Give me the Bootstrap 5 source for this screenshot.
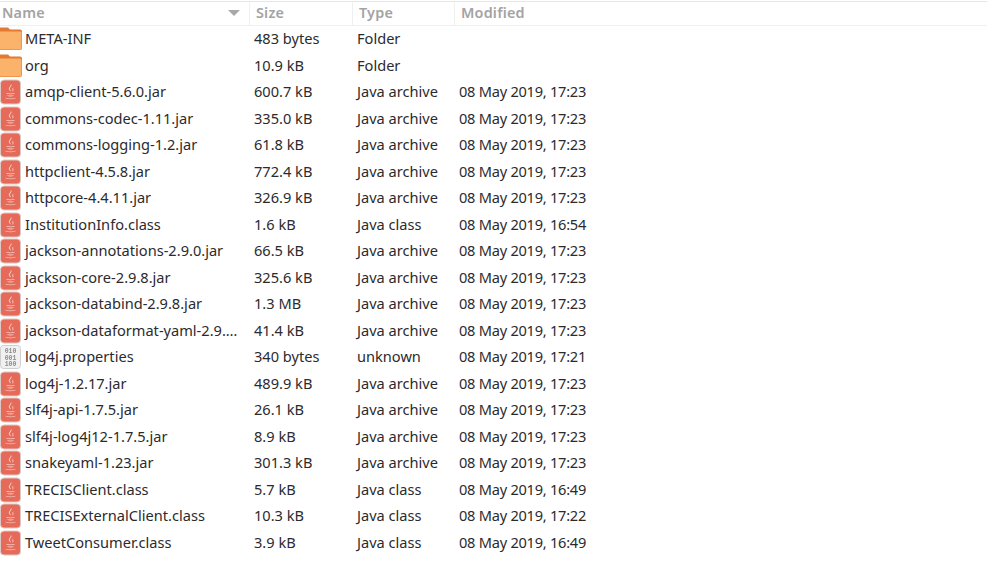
<!DOCTYPE html>
<html lang="en">
<head>
<meta charset="utf-8">
<title>Files</title>
<link href="https://cdn.jsdelivr.net/npm/bootstrap@5.3.0/dist/css/bootstrap.min.css" rel="stylesheet">
<style>
html,body{height:100%;overflow:hidden;background:#fff}
body{font-family:"Noto Sans","Open Sans","Liberation Sans",sans-serif;font-size:14.6px;color:#2b2b2e;padding-top:1px}
.fm-head{height:24.9px;border-top:1px solid #e6e6e6;border-bottom:1px solid #f0f0ee;color:#a3a3a3;font-weight:600;font-size:14.4px;letter-spacing:.2px}
.fm-head>div{border-right:1px solid #f0f0ee;height:100%;display:flex;align-items:center;padding-left:6px;padding-bottom:2px}
.fm-head>div:first-child{padding-left:2px;justify-content:space-between;padding-right:9px}
.fm-head>div:last-child{border-right:0}
.fm-tri{width:0;height:0;border:6px solid transparent;border-top:6px solid #a8a8a8;border-bottom:0;margin-top:2px}
.fm-row{height:26.53px;align-items:center}
.c1{width:250px;flex:none}
.c2{width:103px;flex:none}
.c3{width:102px;flex:none}
.c4{flex:1 1 auto;letter-spacing:-.25px}
.fm-head .c4{letter-spacing:.2px}
.fm-row .c1{display:flex;align-items:center;gap:3px;overflow:hidden;white-space:nowrap}
.fm-row .c2{padding-left:4px}
.fm-row .c3{padding-left:4px}
.fm-row .c4{padding-left:4px}
.fm-ico{width:22px;height:26px;flex:none;display:block;filter:blur(.35px)}
</style>
</head>
<body>
<svg width="0" height="0" class="d-block position-absolute">
<defs>
<symbol id="i-folder" viewBox="0 0 22 26">
<path d="M0 1.500h8l2 2h10a2 2 0 0 1 2 2v16.500a2 2 0 0 1-2 2H0z" fill="#e27a33"/>
<path d="M0 5.500h20a1.500 1.500 0 0 1 1.500 1.500V22a1.500 1.500 0 0 1-1.500 1.500H0z" fill="#fbb36c"/>
</symbol>
<symbol id="i-java" viewBox="0 0 22 26">
<rect x=".5" y="1" width="20" height="24" rx="3.500" fill="#e56a5a" stroke="#dcc9c5"/>
<g fill="#f9cfc6">
<path d="M11 5c2 2-2 3.500-1 5.500.4.800 1 1.200 1 2-1-.6-2.400-1.700-2.200-3C9 8 11 7 11 5zM13.500 8.500c-1 .7-1.500 1.300-1 2.500.3.700.2 1.200-.2 1.700.9-.4 1.500-1.200 1-2.300-.3-.7-.2-1.200.2-1.900z"/>
<path d="M6.500 14c2 .5 6 .5 8 0v.8c-2 .5-6 .5-8 0zM7.500 16.300c1.500.4 4.500.4 6 0v.8c-1.500.4-4.500.4-6 0zM5 18.800c3 1 8 1 11 0-.5 1.800-10.500 1.800-11 0z"/>
</g>
</symbol>
<symbol id="i-bin" viewBox="0 0 22 26">
<rect x=".5" y="1.500" width="20" height="23" rx="3" fill="#f1f1f1" stroke="#cfcfcf"/>
<text x="10.500" y="9" font-size="6.500" font-family="Liberation Mono,monospace" font-weight="700" fill="#8c8c8c" text-anchor="middle">010</text>
<text x="10.500" y="15.500" font-size="6.500" font-family="Liberation Mono,monospace" font-weight="700" fill="#8c8c8c" text-anchor="middle">001</text>
<text x="10.500" y="22" font-size="6.500" font-family="Liberation Mono,monospace" font-weight="700" fill="#8c8c8c" text-anchor="middle">100</text>
</symbol>
</defs>
</svg>
<div class="fm-head d-flex">
<div class="c1"><span>Name</span><span class="fm-tri"></span></div>
<div class="c2">Size</div>
<div class="c3">Type</div>
<div class="c4">Modified</div>
</div>
<div class="fm-rows">
<div class="fm-row d-flex"><div class="c1"><svg class="fm-ico"><use href="#i-folder"/></svg>META-INF</div><div class="c2">483 bytes</div><div class="c3">Folder</div><div class="c4"></div></div>
<div class="fm-row d-flex"><div class="c1"><svg class="fm-ico"><use href="#i-folder"/></svg>org</div><div class="c2">10.9 kB</div><div class="c3">Folder</div><div class="c4"></div></div>
<div class="fm-row d-flex"><div class="c1"><svg class="fm-ico"><use href="#i-java"/></svg>amqp-client-5.6.0.jar</div><div class="c2">600.7 kB</div><div class="c3">Java archive</div><div class="c4">08 May 2019, 17:23</div></div>
<div class="fm-row d-flex"><div class="c1"><svg class="fm-ico"><use href="#i-java"/></svg>commons-codec-1.11.jar</div><div class="c2">335.0 kB</div><div class="c3">Java archive</div><div class="c4">08 May 2019, 17:23</div></div>
<div class="fm-row d-flex"><div class="c1"><svg class="fm-ico"><use href="#i-java"/></svg>commons-logging-1.2.jar</div><div class="c2">61.8 kB</div><div class="c3">Java archive</div><div class="c4">08 May 2019, 17:23</div></div>
<div class="fm-row d-flex"><div class="c1"><svg class="fm-ico"><use href="#i-java"/></svg>httpclient-4.5.8.jar</div><div class="c2">772.4 kB</div><div class="c3">Java archive</div><div class="c4">08 May 2019, 17:23</div></div>
<div class="fm-row d-flex"><div class="c1"><svg class="fm-ico"><use href="#i-java"/></svg>httpcore-4.4.11.jar</div><div class="c2">326.9 kB</div><div class="c3">Java archive</div><div class="c4">08 May 2019, 17:23</div></div>
<div class="fm-row d-flex"><div class="c1"><svg class="fm-ico"><use href="#i-java"/></svg>InstitutionInfo.class</div><div class="c2">1.6 kB</div><div class="c3">Java class</div><div class="c4">08 May 2019, 16:54</div></div>
<div class="fm-row d-flex"><div class="c1"><svg class="fm-ico"><use href="#i-java"/></svg>jackson-annotations-2.9.0.jar</div><div class="c2">66.5 kB</div><div class="c3">Java archive</div><div class="c4">08 May 2019, 17:23</div></div>
<div class="fm-row d-flex"><div class="c1"><svg class="fm-ico"><use href="#i-java"/></svg>jackson-core-2.9.8.jar</div><div class="c2">325.6 kB</div><div class="c3">Java archive</div><div class="c4">08 May 2019, 17:23</div></div>
<div class="fm-row d-flex"><div class="c1"><svg class="fm-ico"><use href="#i-java"/></svg>jackson-databind-2.9.8.jar</div><div class="c2">1.3 MB</div><div class="c3">Java archive</div><div class="c4">08 May 2019, 17:23</div></div>
<div class="fm-row d-flex"><div class="c1"><svg class="fm-ico"><use href="#i-java"/></svg>jackson-dataformat-yaml-2.9.…</div><div class="c2">41.4 kB</div><div class="c3">Java archive</div><div class="c4">08 May 2019, 17:23</div></div>
<div class="fm-row d-flex"><div class="c1"><svg class="fm-ico"><use href="#i-bin"/></svg>log4j.properties</div><div class="c2">340 bytes</div><div class="c3">unknown</div><div class="c4">08 May 2019, 17:21</div></div>
<div class="fm-row d-flex"><div class="c1"><svg class="fm-ico"><use href="#i-java"/></svg>log4j-1.2.17.jar</div><div class="c2">489.9 kB</div><div class="c3">Java archive</div><div class="c4">08 May 2019, 17:23</div></div>
<div class="fm-row d-flex"><div class="c1"><svg class="fm-ico"><use href="#i-java"/></svg>slf4j-api-1.7.5.jar</div><div class="c2">26.1 kB</div><div class="c3">Java archive</div><div class="c4">08 May 2019, 17:23</div></div>
<div class="fm-row d-flex"><div class="c1"><svg class="fm-ico"><use href="#i-java"/></svg>slf4j-log4j12-1.7.5.jar</div><div class="c2">8.9 kB</div><div class="c3">Java archive</div><div class="c4">08 May 2019, 17:23</div></div>
<div class="fm-row d-flex"><div class="c1"><svg class="fm-ico"><use href="#i-java"/></svg>snakeyaml-1.23.jar</div><div class="c2">301.3 kB</div><div class="c3">Java archive</div><div class="c4">08 May 2019, 17:23</div></div>
<div class="fm-row d-flex"><div class="c1"><svg class="fm-ico"><use href="#i-java"/></svg>TRECISClient.class</div><div class="c2">5.7 kB</div><div class="c3">Java class</div><div class="c4">08 May 2019, 16:49</div></div>
<div class="fm-row d-flex"><div class="c1"><svg class="fm-ico"><use href="#i-java"/></svg>TRECISExternalClient.class</div><div class="c2">10.3 kB</div><div class="c3">Java class</div><div class="c4">08 May 2019, 17:22</div></div>
<div class="fm-row d-flex"><div class="c1"><svg class="fm-ico"><use href="#i-java"/></svg>TweetConsumer.class</div><div class="c2">3.9 kB</div><div class="c3">Java class</div><div class="c4">08 May 2019, 16:49</div></div>
</div>
</body>
</html>
